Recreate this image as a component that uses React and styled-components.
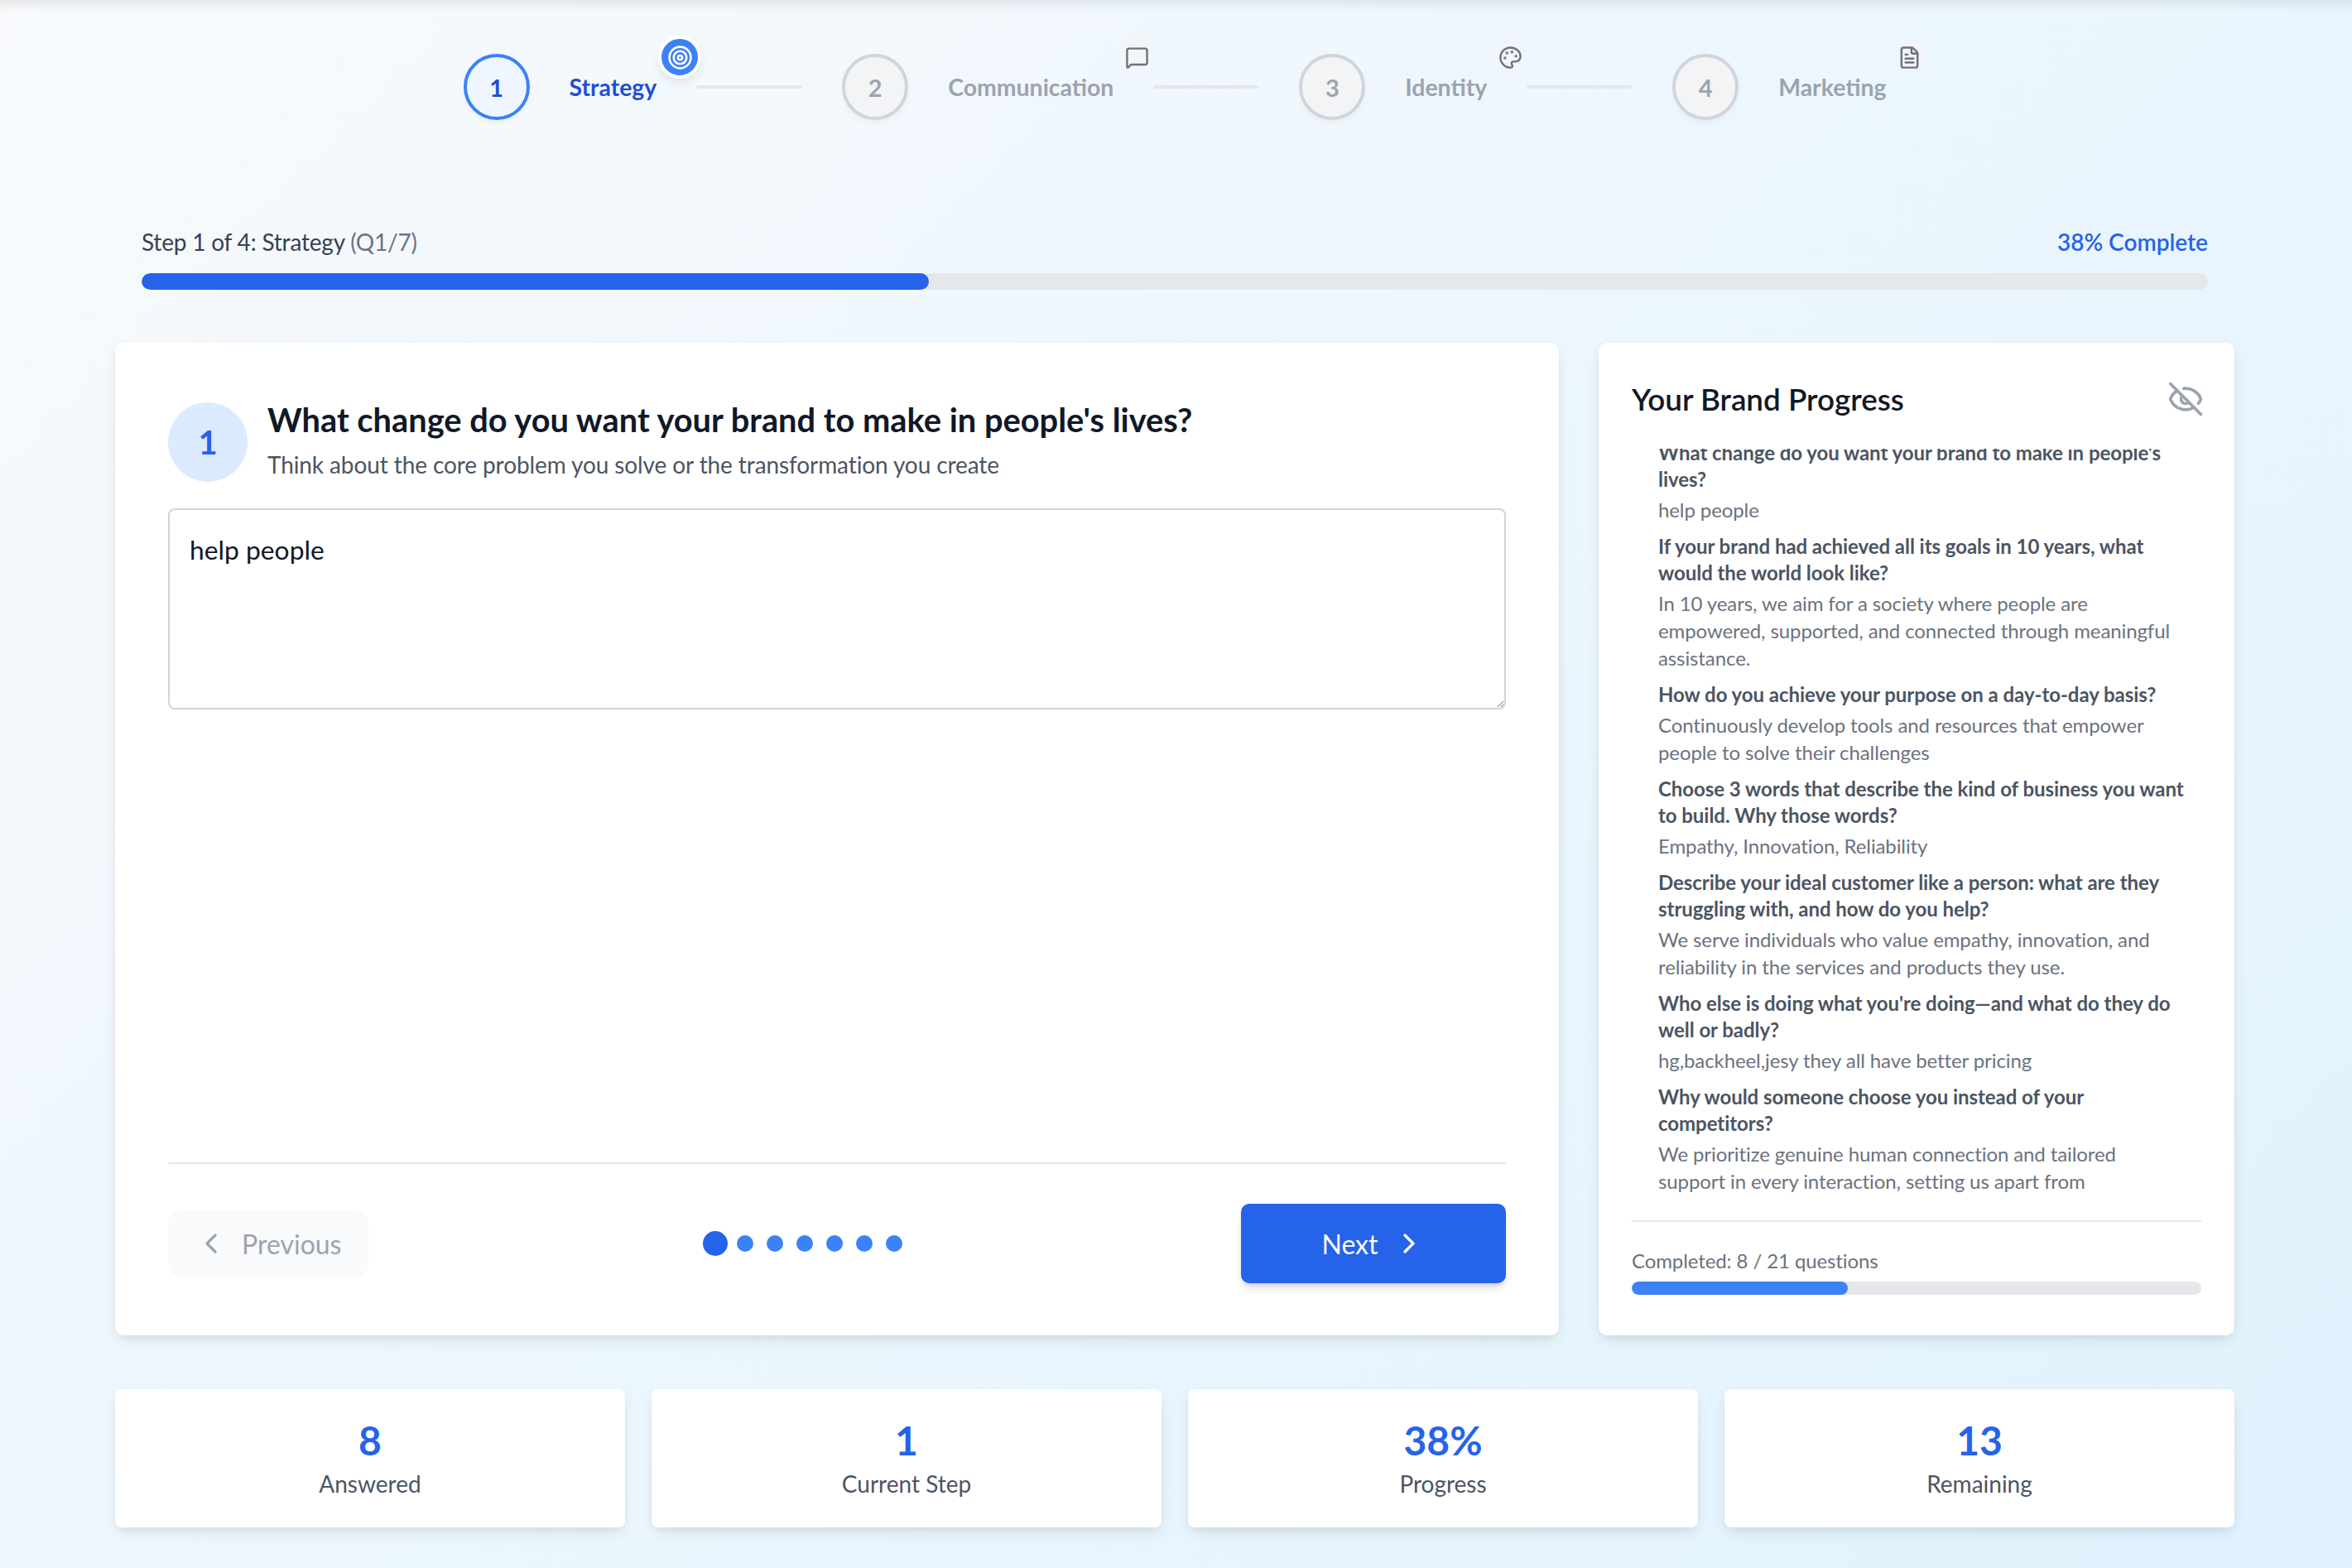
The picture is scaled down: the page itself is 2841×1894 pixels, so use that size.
import React from "react";
import styled, { createGlobalStyle } from "styled-components";
import {
  Target,
  MessageSquare,
  Palette,
  FileText,
  EyeOff,
  ChevronLeft,
  ChevronRight,
} from "lucide-react";

const steps = [
  { n: 1, label: "Strategy", icon: Target, active: true },
  { n: 2, label: "Communication", icon: MessageSquare },
  { n: 3, label: "Identity", icon: Palette },
  { n: 4, label: "Marketing", icon: FileText },
];

const answers = [
  {
    q: "What change do you want your brand to make in people's lives?",
    a: "help people",
  },
  {
    q: "If your brand had achieved all its goals in 10 years, what would the world look like?",
    a: "In 10 years, we aim for a society where people are empowered, supported, and connected through meaningful assistance.",
  },
  {
    q: "How do you achieve your purpose on a day-to-day basis?",
    a: "Continuously develop tools and resources that empower people to solve their challenges",
  },
  {
    q: "Choose 3 words that describe the kind of business you want to build. Why those words?",
    a: "Empathy, Innovation, Reliability",
  },
  {
    q: "Describe your ideal customer like a person: what are they struggling with, and how do you help?",
    a: "We serve individuals who value empathy, innovation, and reliability in the services and products they use.",
  },
  {
    q: "Who else is doing what you're doing—and what do they do well or badly?",
    a: "hg,backheel,jesy they all have better pricing",
  },
  {
    q: "Why would someone choose you instead of your competitors?",
    a: "We prioritize genuine human connection and tailored support in every interaction, setting us apart from",
  },
];

const stats = [
  { value: "8", label: "Answered" },
  { value: "1", label: "Current Step" },
  { value: "38%", label: "Progress" },
  { value: "13", label: "Remaining" },
];

export default function App() {
  return (
    <Page>
      <GlobalStyle />
      <Stepper>
        {steps.map((s, i) => (
          <React.Fragment key={s.n}>
            <StepCircle $active={s.active}>{s.n}</StepCircle>
            <StepLabel $active={s.active}>
              {s.label}
              <StepBadge $active={s.active}>
                <s.icon size={s.active ? 31 : 29} strokeWidth={2} />
              </StepBadge>
            </StepLabel>
            {i < steps.length - 1 && <Connector />}
          </React.Fragment>
        ))}
      </Stepper>

      <Container>
        <Overall>
          <OverallRow>
            <OverallText>
              Step 1 of 4: Strategy <Muted>(Q1/7)</Muted>
            </OverallText>
            <Percent>38% Complete</Percent>
          </OverallRow>
          <Track $height={20}>
            <Fill $color="#2563eb" style={{ width: "38.1%" }} />
          </Track>
        </Overall>

        <Columns>
          <MainCard>
            <Question>
              <QuestionNumber>1</QuestionNumber>
              <div>
                <QuestionTitle>
                  What change do you want your brand to make in people's lives?
                </QuestionTitle>
                <QuestionHint>
                  Think about the core problem you solve or the transformation
                  you create
                </QuestionHint>
              </div>
            </Question>
            <Answer defaultValue="help people" />
            <Nav>
              <PrevButton>
                <ChevronLeft size={40} strokeWidth={2} />
                Previous
              </PrevButton>
              <Dots>
                {[0, 1, 2, 3, 4, 5, 6].map((d) => (
                  <Dot key={d} $active={d === 0} />
                ))}
              </Dots>
              <NextButton>
                Next
                <ChevronRight size={40} strokeWidth={2} />
              </NextButton>
            </Nav>
          </MainCard>

          <SideCard>
            <SideHeader>
              <SideTitle>Your Brand Progress</SideTitle>
              <EyeOff size={44} color="#9ca3af" strokeWidth={2} />
            </SideHeader>
            <AnswerWindow>
              <AnswerList>
                {answers.map((item) => (
                  <AnswerItem key={item.q}>
                    <AnswerQ>{item.q}</AnswerQ>
                    <AnswerA>{item.a}</AnswerA>
                  </AnswerItem>
                ))}
              </AnswerList>
            </AnswerWindow>
            <SideFooter>
              <Completed>Completed: 8 / 21 questions</Completed>
              <Track $height={16}>
                <Fill $color="#3b82f6" style={{ width: "38%" }} />
              </Track>
            </SideFooter>
          </SideCard>
        </Columns>

        <StatsRow>
          {stats.map((s) => (
            <StatCard key={s.label}>
              <StatValue>{s.value}</StatValue>
              <StatLabel>{s.label}</StatLabel>
            </StatCard>
          ))}
        </StatsRow>
      </Container>
    </Page>
  );
}

const GlobalStyle = createGlobalStyle`
  html, body {
    margin: 0;
    padding: 0;
  }
  body {
    font-family: "Lato", "Liberation Sans", sans-serif;
  }
  * {
    box-sizing: border-box;
  }
`;

const Page = styled.div`
  width: 2841px;
  height: 1894px;
  overflow: hidden;
  background: linear-gradient(135deg, #f8fafc 0%, #e0f2fe 100%);
`;

const Stepper = styled.header`
  height: 210px;
  padding-right: 3px;
  display: flex;
  align-items: center;
  justify-content: center;
  gap: 48px;
  box-shadow: inset 0 14px 16px -12px rgba(0, 0, 0, 0.12);
`;

const StepCircle = styled.div`
  width: 80px;
  height: 80px;
  flex: none;
  border-radius: 50%;
  display: flex;
  align-items: center;
  justify-content: center;
  font-size: 29px;
  font-weight: 700;
  border: 4px solid ${(p) => (p.$active ? "#3b82f6" : "#d1d5db")};
  background: ${(p) => (p.$active ? "#eff6ff" : "#f3f4f6")};
  color: ${(p) => (p.$active ? "#1d4ed8" : "#9ca3af")};
  box-shadow: 0 4px 8px -2px rgba(0, 0, 0, 0.06);
`;

const StepLabel = styled.div`
  position: relative;
  font-size: 28.4px;
  font-weight: 700;
  line-height: 40px;
  white-space: nowrap;
  color: ${(p) => (p.$active ? "#1d4ed8" : "#9ca3af")};
`;

const StepBadge = styled.span`
  position: absolute;
  top: ${(p) => (p.$active ? -42 : -36)}px;
  right: ${(p) => (p.$active ? -54 : -48)}px;
  width: ${(p) => (p.$active ? 52 : 40)}px;
  height: ${(p) => (p.$active ? 52 : 40)}px;
  border-radius: 50%;
  display: flex;
  align-items: center;
  justify-content: center;
  border: ${(p) => (p.$active ? "4px solid #ffffff" : "none")};
  background: ${(p) => (p.$active ? "#3b82f6" : "rgba(243, 244, 246, 0.7)")};
  color: ${(p) => (p.$active ? "#ffffff" : "#6b7280")};
  box-shadow: ${(p) => (p.$active ? "0 6px 12px -2px rgba(0, 0, 0, 0.1)" : "none")};
`;

const Connector = styled.div`
  width: 128px;
  height: 4px;
  flex: none;
  border-radius: 2px;
  background: #e5e7eb;
`;

const Container = styled.main`
  padding: 62px 142px 0 139px;
`;

const Overall = styled.section`
  padding: 0 32px;
  margin-bottom: 64px;
`;

const OverallRow = styled.div`
  display: flex;
  justify-content: space-between;
  align-items: center;
  height: 40px;
  margin-bottom: 18px;
`;

const OverallText = styled.span`
  font-size: 28px;
  letter-spacing: -0.2px;
  color: #374151;
`;

const Muted = styled.span`
  color: #6b7280;
`;

const Percent = styled.span`
  font-size: 28px;
  font-weight: 600;
  color: #2563eb;
`;

const Track = styled.div`
  height: ${(p) => p.$height}px;
  border-radius: ${(p) => p.$height / 2}px;
  background: #e5e7eb;
  overflow: hidden;
`;

const Fill = styled.div`
  height: 100%;
  border-radius: inherit;
  background: ${(p) => p.$color};
`;

const Columns = styled.div`
  display: grid;
  grid-template-columns: 1744px 768px;
  gap: 48px;
  height: 1199px;
  margin-bottom: 65px;
`;

const Card = styled.section`
  background: #ffffff;
  border-radius: 10px;
  box-shadow: 0 8px 20px -4px rgba(0, 0, 0, 0.1), 0 3px 8px -2px rgba(0, 0, 0, 0.06);
`;

const MainCard = styled(Card)`
  padding: 72px 64px 63px;
  display: flex;
  flex-direction: column;
`;

const Question = styled.div`
  display: flex;
  gap: 24px;
  margin-bottom: 32px;
`;

const QuestionNumber = styled.div`
  width: 96px;
  height: 96px;
  flex: none;
  border-radius: 50%;
  background: #dbeafe;
  color: #2563eb;
  font-size: 40px;
  font-weight: 700;
  display: flex;
  align-items: center;
  justify-content: center;
`;

const QuestionTitle = styled.h2`
  margin: -1px 0 0;
  font-size: 39.8px;
  font-weight: 700;
  line-height: 44px;
  color: #111827;
`;

const QuestionHint = styled.p`
  margin: 12px 0 0;
  font-size: 28px;
  line-height: 40px;
  letter-spacing: -0.1px;
  color: #4b5563;
`;

const Answer = styled.textarea`
  display: block;
  width: 100%;
  height: 243px;
  padding: 26px 24px 24px;
  border: 2px solid #d1d5db;
  border-radius: 8px;
  font-family: inherit;
  font-size: 31.8px;
  line-height: 44px;
  color: #111827;
  background: #ffffff;
  resize: vertical;
  outline: none;
`;

const Nav = styled.div`
  margin-top: auto;
  padding-top: 48px;
  border-top: 2px solid #e5e7eb;
  display: flex;
  align-items: center;
  justify-content: space-between;
`;

const PrevButton = styled.button`
  height: 80px;
  width: 242px;
  padding: 0 32px;
  border: none;
  border-radius: 16px;
  background: #f9fafb;
  color: #9ca3af;
  font-family: inherit;
  font-size: 32px;
  display: flex;
  align-items: center;
  gap: 17px;
`;

const Dots = styled.div`
  display: flex;
  align-items: center;
  gap: 16px;
`;

const Dot = styled.span`
  width: 20px;
  height: 20px;
  border-radius: 50%;
  background: ${(p) => (p.$active ? "#2563eb" : "#3b82f6")};
  transform: scale(${(p) => (p.$active ? 1.5 : 1)});
`;

const NextButton = styled.button`
  height: 96px;
  width: 320px;
  border: none;
  border-radius: 10px;
  background: #2563eb;
  color: #ffffff;
  font-family: inherit;
  font-size: 32px;
  display: flex;
  align-items: center;
  justify-content: center;
  gap: 17px;
  box-shadow: 0 8px 12px -3px rgba(0, 0, 0, 0.15), 0 3px 5px -2px rgba(0, 0, 0, 0.1);
`;

const SideCard = styled(Card)`
  padding: 40px 40px 49px;
  display: flex;
  flex-direction: column;
  min-height: 0;
`;

const SideHeader = styled.div`
  display: flex;
  align-items: center;
  justify-content: space-between;
  height: 56px;
  margin-right: -3px;
  margin-bottom: 32px;
`;

const SideTitle = styled.h3`
  margin: 0;
  font-size: 36.8px;
  font-weight: 600;
  color: #111827;
`;

const AnswerWindow = styled.div`
  flex: 1;
  min-height: 0;
  overflow: hidden;
`;

const AnswerList = styled.div`
  margin-top: -11px;
  padding: 0 20px 0 32px;
`;

const AnswerItem = styled.div`
  margin-bottom: 12px;
`;

const AnswerQ = styled.div`
  font-size: 24px;
  font-weight: 700;
  line-height: 32px;
  letter-spacing: -0.05px;
  color: #4b5563;
`;

const AnswerA = styled.div`
  margin-top: 4px;
  font-size: 24px;
  line-height: 33px;
  letter-spacing: -0.1px;
  color: #6b7280;
`;

const SideFooter = styled.div`
  margin-top: 24px;
  padding-top: 31px;
  border-top: 2px solid #e5e7eb;
`;

const Completed = styled.div`
  font-size: 24px;
  line-height: 32px;
  letter-spacing: -0.1px;
  margin-bottom: 9px;
  color: #6b7280;
`;

const StatsRow = styled.div`
  display: grid;
  grid-template-columns: repeat(4, 1fr);
  gap: 32px;
`;

const StatCard = styled(Card)`
  height: 167px;
  border-radius: 8px;
  display: flex;
  flex-direction: column;
  align-items: center;
  justify-content: center;
`;

const StatValue = styled.div`
  font-size: 48px;
  font-weight: 700;
  line-height: 60px;
  margin-top: -3px;
  color: #2563eb;
`;

const StatLabel = styled.div`
  font-size: 28px;
  line-height: 36px;
  margin-top: 4px;
  color: #4b5563;
`;
